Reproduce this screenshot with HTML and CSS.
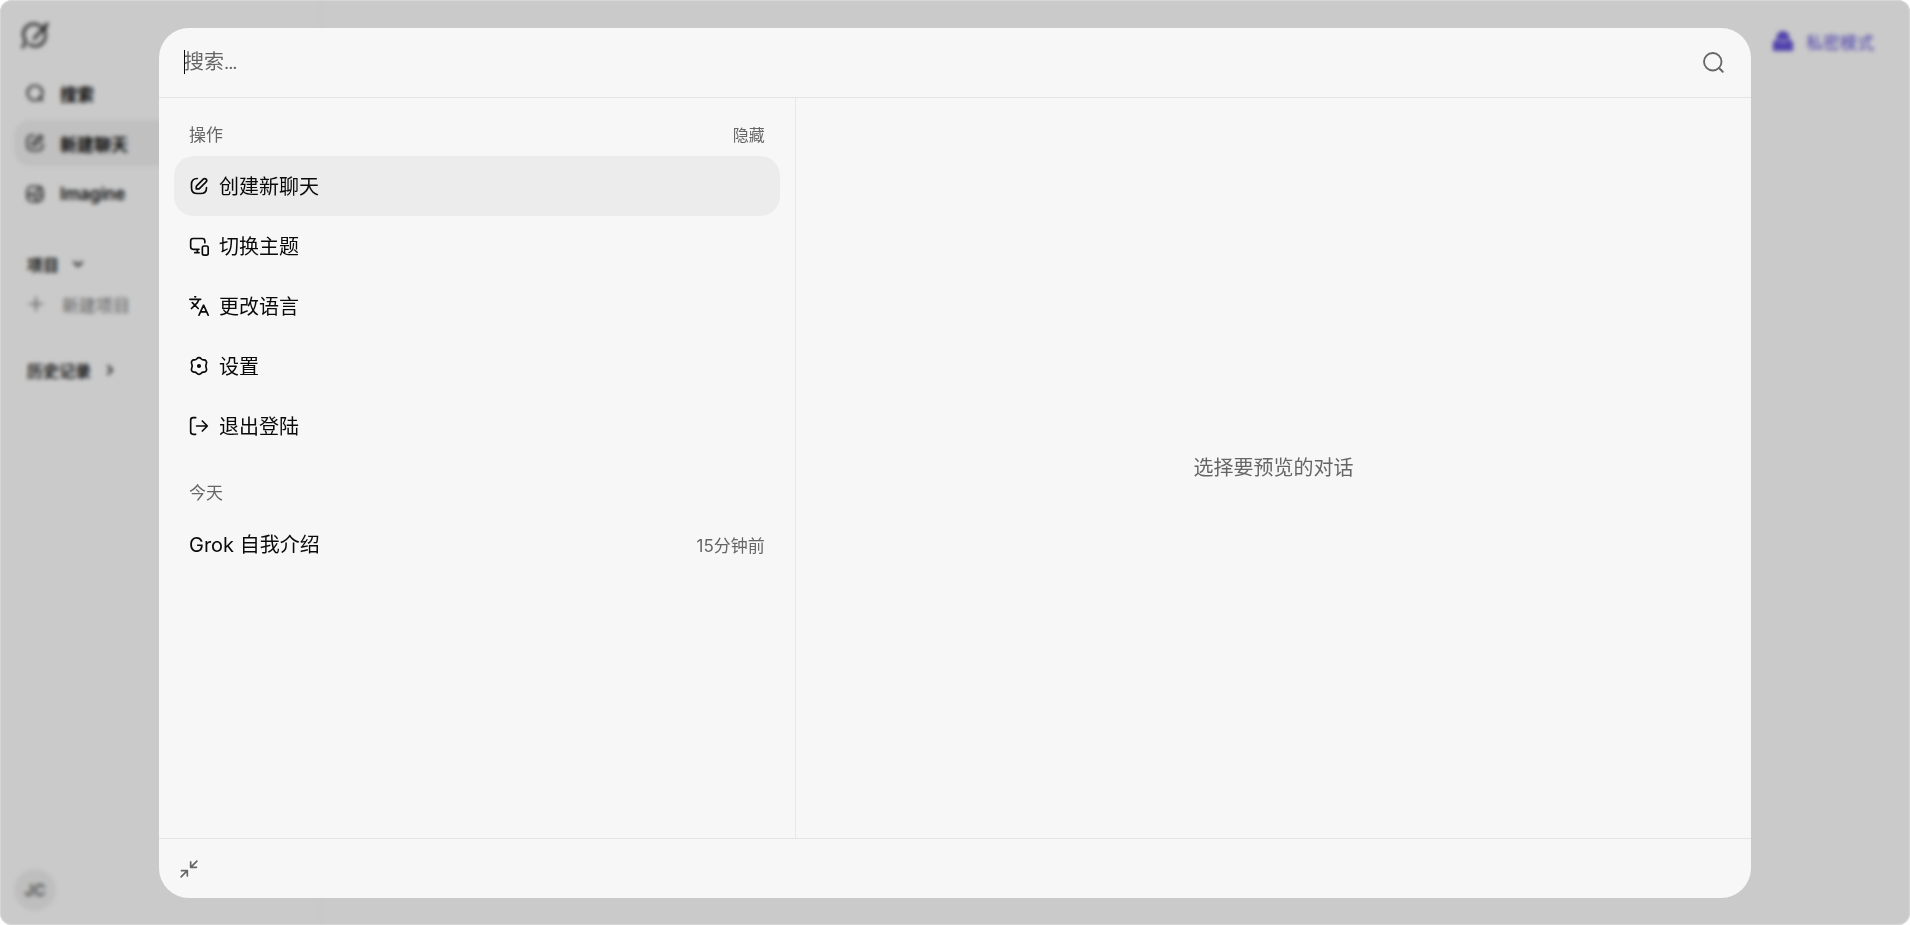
FILE: index.html
```html
<!DOCTYPE html>
<html lang="zh-CN">
<head>
	<meta charset="UTF-8">
	<meta name="viewport" content="width=device-width, initial-scale=1">
	<title>Grok</title>
	<link rel="stylesheet" href="styles.css">
</head>
<body>
	<div class="app">
		<aside class="sidebar">
			<a class="logo" href="#" aria-label="Grok">
				<svg viewBox="0 0 32 32"><path d="M26 12a11 11 0 0 1-16 14M22 7A11 11 0 0 0 6 22c0 3-2 5-3 7M15 20L29 4c-2 3-3 5-3 9"/></svg>
			</a>
			<nav class="nav">
				<a href="#"><svg viewBox="0 0 24 24"><circle cx="12" cy="12" r="9"/><path d="M17 17l4 4"/></svg>搜索</a>
				<a href="#" class="active"><svg viewBox="0 0 24 24"><path d="M11 3H8a5 5 0 0 0-5 5v8a5 5 0 0 0 5 5h8a5 5 0 0 0 5-5v-3M9 15v-3l8-8a2 2 0 0 1 3 3l-8 8z"/></svg>新建聊天</a>
				<a href="#"><svg viewBox="0 0 24 24"><rect x="3" y="3" width="18" height="18" rx="5"/><path d="M4 14l5-3 6 9M13 9l6-4M14 12l6 2"/></svg>Imagine</a>
			</nav>
			<button class="group">项目<svg viewBox="0 0 24 24"><path d="M6 9l6 6 6-6"/></svg></button>
			<button class="new-project"><svg viewBox="0 0 24 24"><path d="M12 4v16M4 12h16"/></svg>新建项目</button>
			<button class="group history">历史记录<svg viewBox="0 0 24 24"><path d="M9 6l6 6-6 6"/></svg></button>
			<button class="avatar">JC</button>
		</aside>
		<main class="main">
			<a class="private" href="#">
				<svg viewBox="0 0 24 24"><path d="M1 23V13l4-3V8a7 7 0 0 1 14 0v2l4 3v10z"/><path class="brim" d="M7 11q5 3 10 0"/></svg>私密模式
			</a>
		</main>
	</div>

	<div class="overlay">
		<div class="dialog" role="dialog" aria-label="搜索">
			<div class="search">
				<span class="caret"></span>
				<input type="text" id="search" placeholder="搜索…" aria-label="搜索" autofocus>
				<svg viewBox="0 0 24 24"><circle cx="11" cy="11" r="7"/><path d="M16 16l3 3"/></svg>
			</div>

			<div class="content">
				<div class="list">
					<div class="heading">
						<h2>操作</h2>
						<button>隐藏</button>
					</div>
					<button class="item selected">
						<svg viewBox="0 0 24 24"><path d="M10 3C5 3 3 5 3 10v4c0 5 2 7 7 7h4c5 0 7-2 7-7"/><path d="M12.500 15.100l8-8a2.300 2.300 0 0 0-3.300-3.300l-8 8a1.500 1.500 0 0 0-.5 1v2.700h2.800a1.500 1.500 0 0 0 1-.4z"/></svg>
						<span>创建新聊天</span>
					</button>
					<button class="item">
						<svg viewBox="0 0 24 24"><path d="M19 8V6a3 3 0 0 0-3-3H5a3 3 0 0 0-3 3v7a3 3 0 0 0 3 3h7M10 20v-4M7 20h5"/><rect x="16" y="12" width="7" height="11" rx="2"/></svg>
						<span>切换主题</span>
					</button>
					<button class="item">
						<svg viewBox="0 0 24 24"><path d="M4 8l7 7M3 15l7-7 2-4M1 4h13M7 1h1M23 23l-5.500-12L12 23M14 19h7"/></svg>
						<span>更改语言</span>
					</button>
					<button class="item">
						<svg viewBox="0 0 24 24"><path d="M9.400 3.200a3.200 3.200 0 0 1 5.200 0c.8 1 1.700 1.500 2.900 1.400a3.200 3.200 0 0 1 3.300 4.600c-.6 1.200-.6 4.400 0 5.600a3.200 3.200 0 0 1-3.300 4.600c-1.200-.1-2.100.4-2.900 1.400a3.200 3.200 0 0 1-5.200 0c-.8-1-1.700-1.500-2.900-1.400a3.200 3.200 0 0 1-3.300-4.600c.6-1.200.6-4.400 0-5.600a3.200 3.200 0 0 1 3.300-4.600c1.200.1 2.100-.4 2.900-1.400z"/><circle cx="12" cy="12" r="1.500" fill="currentColor"/></svg>
						<span>设置</span>
					</button>
					<button class="item">
						<svg viewBox="0 0 24 24"><path d="M8 2H5a3 3 0 0 0-3 3v14a3 3 0 0 0 3 3h3M9 12h13M16 6l6 6-6 6"/></svg>
						<span>退出登陆</span>
					</button>

					<div class="heading">
						<h2>今天</h2>
					</div>
					<a class="item" href="#">
						<span>Grok 自我介绍</span>
						<time>15分钟前</time>
					</a>
				</div>
				<div class="preview">选择要预览的对话</div>
			</div>

			<div class="footer">
				<button aria-label="收起">
					<svg viewBox="0 0 24 24"><path d="M21.500 2.500L14 10M14 3.500V10h7M2.500 21.500L10 14M3 14h7v6.500"/></svg>
				</button>
			</div>
		</div>
	</div>

	<script type="text/javascript">
		document.getElementById("search").focus();
	</script>
</body>
</html>
```

FILE: styles.css
```css
*{
	margin: 0;
	padding: 0;
	box-sizing: border-box;
}
body{
	height: 100vh;
	background: #fff;
	color: #0a0a0a;
	font-family: Inter, "Noto Sans CJK SC", sans-serif;
	font-size: 20px;
	overflow: hidden;
}
button, input{
	border: 0;
	outline: 0;
	background: none;
	color: inherit;
	font: inherit;
}
button{
	cursor: pointer;
}
a{
	color: inherit;
	text-decoration: none;
}
svg{
	flex: none;
	fill: none;
	stroke: currentColor;
	stroke-width: 2;
	stroke-linecap: round;
	stroke-linejoin: round;
}

/* page behind the dialog */
.app{
	display: flex;
	height: 100%;
	border-radius: 12px;
	background: #fdfdfd;
	font-size: 17px;
}
.sidebar{
	display: flex;
	flex-direction: column;
	align-items: flex-start;
	width: 322px;
	padding: 20px 14px 14px;
	border-right: 1px solid #f4f4f4;
}
.logo{
	height: 50px;
	padding-left: 6px;
	color: #333;
}
.logo svg{
	width: 30px;
	height: 30px;
	stroke-width: 3;
}
.nav{
	display: flex;
	flex-direction: column;
	gap: 4px;
	width: 100%;
}
.nav a{
	display: flex;
	align-items: center;
	gap: 15px;
	height: 46px;
	padding-left: 11px;
	border-radius: 16px;
	font-weight: 600;
}
.nav a.active{
	background: #f0f0f0;
}
.nav svg, .new-project svg{
	width: 20px;
	height: 20px;
}
.nav a:last-child{
	height: 48px;
}
.group{
	display: flex;
	align-items: center;
	gap: 11px;
	height: 40px;
	margin-top: 26px;
	padding-left: 13px;
	font-size: 16px;
	font-weight: 600;
	color: #222;
}
.group svg{
	width: 16px;
	height: 16px;
	stroke-width: 3;
}
.new-project{
	display: flex;
	align-items: center;
	gap: 16px;
	height: 40px;
	padding-left: 12px;
	color: #777;
}
.avatar{
	width: 42px;
	height: 42px;
	margin-top: auto;
	border-radius: 50%;
	background: #eee;
	font-size: 16px;
	font-weight: 500;
	color: #444;
}
.main{
	display: flex;
	flex: 1;
	justify-content: flex-end;
	align-items: flex-start;
	padding: 28px 36px;
}
.private{
	display: flex;
	align-items: center;
	gap: 12px;
	height: 26px;
	color: #6454d8;
}
.private svg{
	width: 22px;
	height: 22px;
	fill: currentColor;
	stroke: none;
}
.private .brim{
	fill: none;
	stroke: #c4bcf4;
}

.overlay{
	position: fixed;
	inset: 0;
	display: flex;
	padding: 28px 159px 27px;
	border-radius: 12px;
	background: rgba(0, 0, 0, .2);
	backdrop-filter: blur(2px);
	box-shadow: inset 0 0 0 1px #d6d6d6;
}

/* search dialog */
.dialog{
	display: flex;
	flex-direction: column;
	flex: 1;
	border-radius: 30px;
	background: #f7f7f7;
	overflow: hidden;
}
.search{
	position: relative;
	display: flex;
	align-items: center;
	height: 70px;
	padding: 0 22px 0 25px;
	border-bottom: 1px solid #e4e4e4;
	color: #666;
}
.search input{
	flex: 1;
	min-width: 0;
	height: 40px;
	padding-bottom: 2px;
	font-family: Roboto, "Noto Sans CJK SC", sans-serif;
	caret-color: transparent;
}
.search input::placeholder{
	color: #666;
}
.caret{
	position: absolute;
	top: 22px;
	left: 25px;
	width: 1px;
	height: 24px;
	background: #0a0a0a;
}
.search svg{
	width: 30px;
	height: 30px;
	stroke-width: 1.5;
}
.content{
	display: flex;
	flex: 1;
	min-height: 0;
}
.list{
	width: 40%;
	padding: 0 15px;
	border-right: 1px solid #e8e8e8;
	overflow: auto;
}
.heading{
	display: flex;
	justify-content: space-between;
	padding: 25px 15px 9px;
	color: #666;
	line-height: 24px;
}
.heading h2{
	font-size: 17px;
	font-weight: 400;
}
.heading button{
	font-size: 16px;
}
.item{
	display: flex;
	align-items: center;
	gap: 10px;
	width: 100%;
	height: 60px;
	padding: 0 15px;
	border-radius: 20px;
}
.item.selected, .item:hover{
	background: #ececec;
}
.item span{
	padding-bottom: 2px;
}
.item svg{
	width: 20px;
	height: 20px;
}
.item time{
	margin-left: auto;
	font-size: 17px;
	color: #666;
}
.preview{
	display: flex;
	flex: 1;
	align-items: center;
	justify-content: center;
	padding-bottom: 4px;
	color: #666;
}
.footer{
	display: flex;
	align-items: center;
	height: 60px;
	padding: 0 15px;
	border-top: 1px solid #e4e4e4;
}
.footer button{
	display: flex;
	align-items: center;
	justify-content: center;
	width: 30px;
	height: 30px;
	color: #666;
}
.footer svg{
	width: 20px;
	height: 20px;
}
```
